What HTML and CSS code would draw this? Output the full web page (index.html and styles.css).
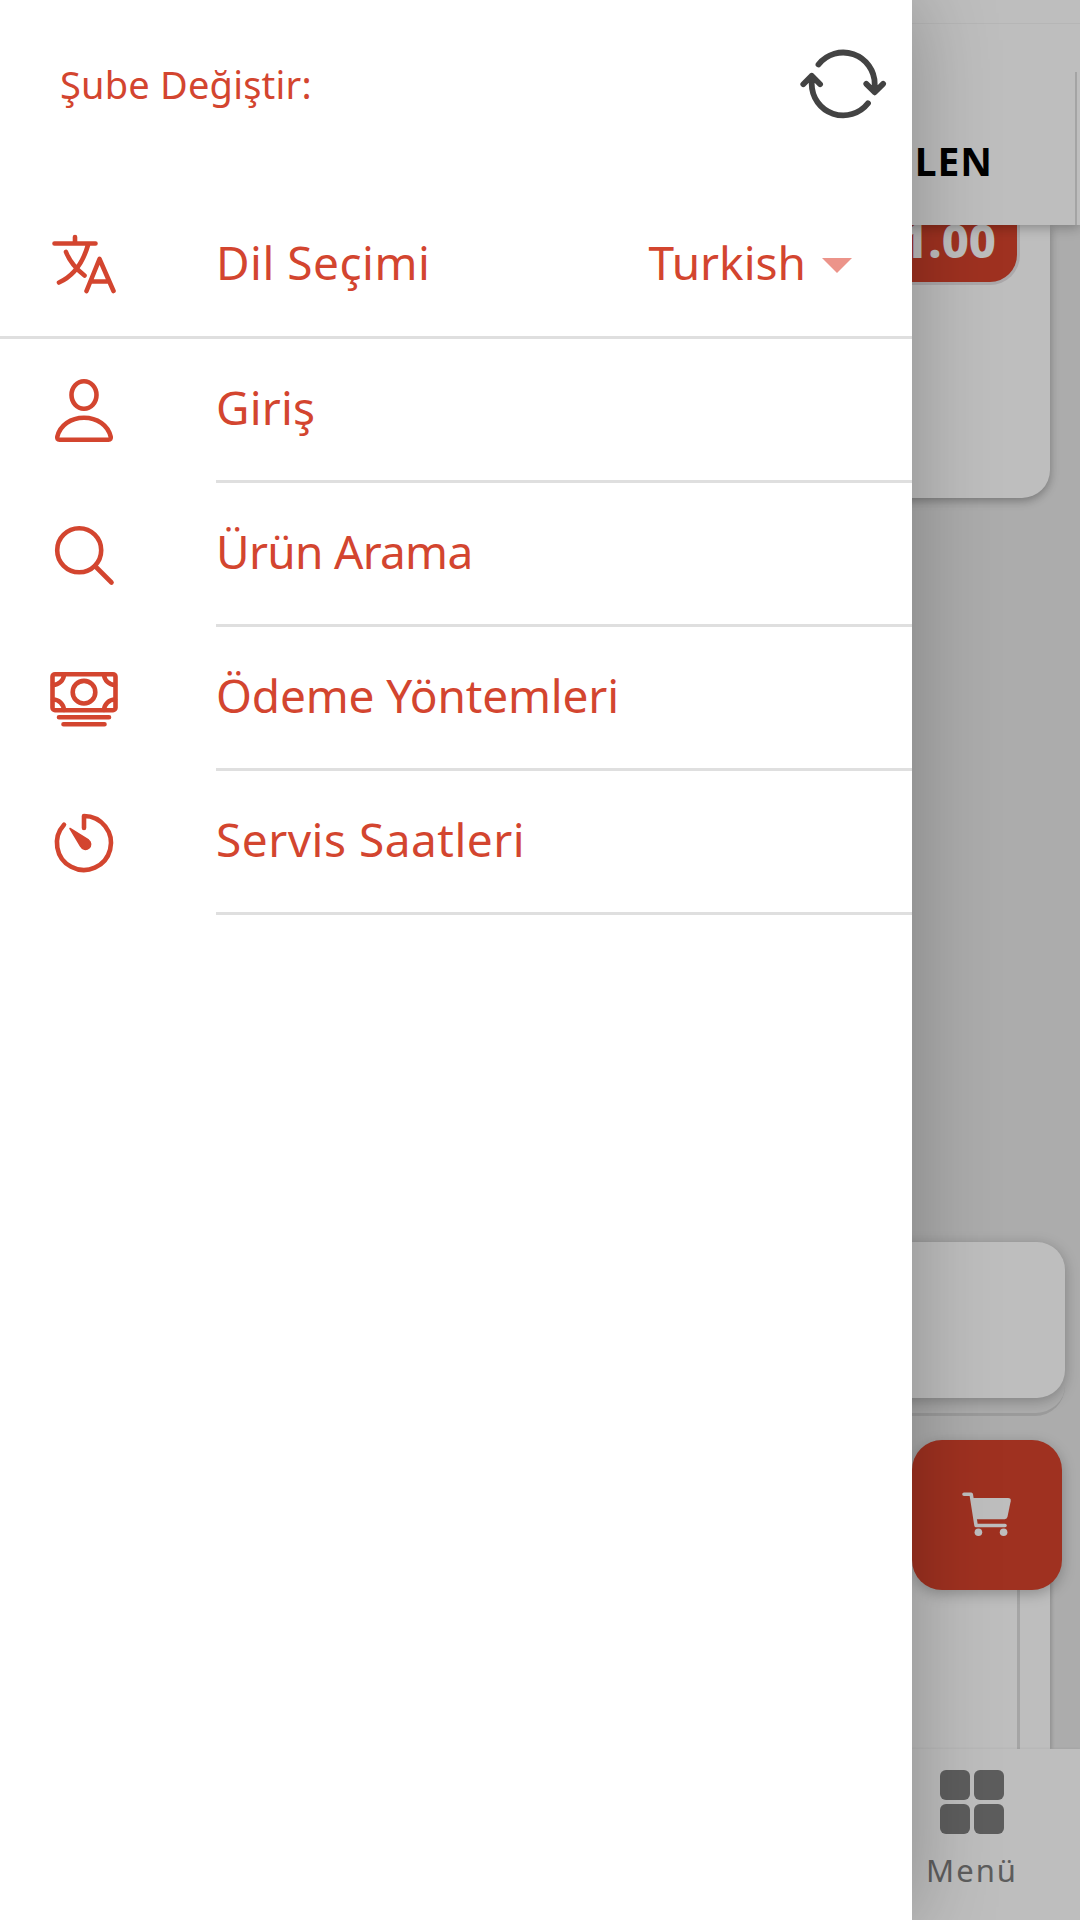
FILE: index.html
```
<!DOCTYPE html>
<html lang="tr">
<head>
  <meta charset="UTF-8" />
  <meta name="viewport" content="width=device-width, initial-scale=1.0" />
  <title>Menü</title>
  <link rel="stylesheet" href="styles.css">
</head>
<body>
  <div class="page">
    <header class="tabs">
      <div class="tabs-strip"></div>
      <div class="tab">LEN</div>
    </header>
    <main>
      <div class="product-card">
        <div class="price">1.00</div>
      </div>
      <div class="info-wrap">
        <div class="info-card"></div>
      </div>
      <div class="order-card">
        <div class="order-inner"></div>
        <button class="cart-btn" aria-label="Sepet">
          <svg width="50" height="46" viewBox="0 0 50 46">
            <path d="M2 3.300h7.200l4.900 31.200H43" fill="none" stroke="currentColor" stroke-width="3.600" stroke-linecap="round" stroke-linejoin="round"/>
            <path d="M10.500 7h35.500q3.300 0 2.700 3.300l-3.200 15.500q-.5 2.400-2.800 2.400H14z" fill="currentColor"/>
            <circle cx="16.400" cy="41.300" r="3.800" fill="currentColor"/>
            <circle cx="41.600" cy="41.300" r="3.800" fill="currentColor"/>
          </svg>
        </button>
      </div>
    </main>
    <footer class="bottom-bar">
      <div class="bottom-item">
        <div class="grid-icon"><i></i><i></i><i></i><i></i></div>
        <span>Menü</span>
      </div>
    </footer>
  </div>

  <div class="overlay"></div>

  <aside class="drawer">
    <div class="branch">
      <span>Şube Değiştir:</span>
      <svg class="refresh" width="96" height="96" viewBox="0 0 96 96">
        <path d="M23.500 28.500A31.500 31.500 0 0 1 79.700 48v8M71.300 47.900l8.400 8.400 8.400-8.400"/>
        <path d="M73 67.300A31.500 31.500 0 0 1 16.700 48v-8M8.300 48.200l8.400-8.400 8.400 8.400"/>
      </svg>
    </div>

    <div class="item language">
      <svg class="icon" viewBox="0 0 84 84">
        <path d="M12.500 21.500h41M33 15v6M46 23Q38 51 17 60.500M24 30q5 13 18.500 23.500M44.500 69l13-32 14 32M49 59.500h18"/>
      </svg>
      <div class="label">
        <span class="t-dil">Dil Seçimi</span>
        <span class="select">Turkish</span>
      </div>
    </div>
    <div class="item">
      <svg class="icon" viewBox="0 0 84 84">
        <ellipse cx="42" cy="27" rx="12.500" ry="13.700"/>
        <path d="M17.500 71.700h49c1.800 0 2.600-1.200 2.200-3C66 57 55 49.700 42 49.700S18 57 15.300 68.700c-.4 1.800.4 3 2.200 3z"/>
      </svg>
      <div class="label"><span class="t-giris">Giriş</span></div>
    </div>
    <div class="item">
      <svg class="icon" viewBox="0 0 84 84">
        <circle cx="37.200" cy="38.200" r="22"/>
        <path d="M53 54l16.500 16.500"/>
      </svg>
      <div class="label"><span class="t-arama">Ürün Arama</span></div>
    </div>
    <div class="item">
      <svg class="icon" viewBox="0 0 84 84">
        <rect x="10.500" y="18.200" width="63" height="36" rx="2.500"/>
        <circle cx="42" cy="36.200" r="11.300"/>
        <path d="M22 18.500A11 11 0 0 1 11 29M62 18.500A11 11 0 0 0 73 29M22 54A11 11 0 0 0 11 43.500M62 54a11 11 0 0 1 11-10.500M17 61.300h50M21.500 68.300h41"/>
      </svg>
      <div class="label"><span class="t-odeme">Ödeme Yöntemleri</span></div>
    </div>
    <div class="item">
      <svg class="icon" viewBox="0 0 84 84">
        <path d="M42 28V16A27 27 0 1 1 22 24.800"/>
        <path class="solid" d="M28 28.500L46.500 40a5.200 5.200 0 1 1-7.700 6.500z"/>
      </svg>
      <div class="label"><span class="t-servis">Servis Saatleri</span></div>
    </div>
  </aside>
</body>
</html>
```
FILE: styles.css
```
* {
  box-sizing: border-box;
}
body {
  margin: 0;
  width: 1080px;
  height: 1920px;
  position: relative;
  overflow: hidden;
  font-family: "Noto Sans", "Open Sans", sans-serif;
}
.page {
  height: 100%;
  display: flex;
  flex-direction: column;
  background: #e7e7e7;
  isolation: isolate;
}
.tabs {
  position: relative;
  z-index: 1;
  height: 225px;
  background: #fff;
  box-shadow: 0 2px 12px rgba(0,0,0,0.3);
}
.tabs-strip {
  height: 24px;
  border-bottom: 1px solid #f4f4f4;
}
.tab {
  height: 153px;
  margin-top: 48px;
  margin-right: 3px;
  padding: 63px 82px 0 0;
  border-right: 2px solid #dcdcdc;
  text-align: right;
  font-size: 39px;
  line-height: 52px;
  font-weight: 700;
  letter-spacing: 1px;
  color: #000;
}
main {
  flex: 1;
  display: flex;
  flex-direction: column;
}
.product-card {
  height: 273px;
  margin-right: 30px;
  background: #fff;
  border-radius: 0 0 28px 0;
  box-shadow: 0 3px 10px rgba(0,0,0,0.3);
}
.price {
  height: 60px;
  margin-right: 30px;
  padding-right: 21px;
  background: #d6432c;
  border: solid #e6e2e4;
  border-width: 0 3px 3px 0;
  border-radius: 0 0 30px 0;
  text-align: right;
  font-size: 47px;
  line-height: 30px;
  font-weight: 800;
  color: #fff;
}
.info-wrap {
  height: 174px;
  margin: 744px 15px 0 0;
  border-bottom: 3px solid #d0d0d0;
  border-radius: 0 30px 30px 0;
}
.info-card {
  height: 156px;
  background: #fff;
  border-radius: 0 28px 28px 0;
  box-shadow: 0 3px 14px rgba(0,0,0,0.25);
}
.order-card {
  position: relative;
  flex: 1;
  margin: 84px 30px 0 0;
  background: #fff;
  box-shadow: 2px 0 3px rgba(0,0,0,0.15);
}
.order-inner {
  height: 100%;
  margin-right: 30px;
  border-right: 3px solid #dedede;
}
.cart-btn {
  position: absolute;
  top: -60px;
  right: -12px;
  width: 150px;
  height: 150px;
  padding: 0;
  border: 0;
  border-radius: 30px;
  background: #d6432c;
  color: #fff;
  box-shadow: 0 4px 14px rgba(0,0,0,0.25);
}
.cart-btn svg {
  display: block;
  margin: -2px 0 0 50px;
}
.bottom-bar {
  position: relative;
  height: 171px;
  background: #fff;
  display: flex;
  justify-content: flex-end;
  box-shadow: 0 -1px 2px rgba(0,0,0,0.05);
}
.bottom-item {
  width: 216px;
  padding-top: 21px;
  display: flex;
  flex-direction: column;
  align-items: center;
  color: #7d7d7d;
  font-size: 31px;
  line-height: 42px;
  letter-spacing: 2px;
}
.grid-icon {
  display: grid;
  grid-template-columns: 30px 30px;
  grid-auto-rows: 30px;
  gap: 4px;
  margin-bottom: 15px;
}
.grid-icon i {
  background: #7d7d7d;
  border-radius: 6px;
}
.overlay {
  position: absolute;
  inset: 0;
  background: rgba(0,0,0,0.255);
}

.drawer {
  position: absolute;
  top: 0;
  left: 0;
  width: 912px;
  height: 100%;
  background: #fff;
  color: #d3452f;
  box-shadow: 0 0 80px rgba(0,0,0,0.27);
}
.branch {
  height: 168px;
  padding: 0 21px 0 60px;
  display: flex;
  align-items: center;
  justify-content: space-between;
  font-size: 38px;
  letter-spacing: 0.2px;
}
.branch svg {
  fill: none;
  stroke: #434343;
  stroke-width: 5.8;
  stroke-linecap: round;
  stroke-linejoin: round;
}
.item {
  height: 144px;
  display: flex;
  align-items: center;
  font-size: 46px;
}
.icon {
  width: 84px;
  height: 84px;
  margin: 0 90px 3px 42px;
  fill: none;
  stroke: currentColor;
  stroke-width: 4.6;
  stroke-linecap: round;
  stroke-linejoin: round;
}
.icon .solid {
  fill: currentColor;
  stroke-width: 1.5;
}
.label {
  flex: 1;
  height: 100%;
  padding-bottom: 5px;
  display: flex;
  align-items: center;
  justify-content: space-between;
  border-bottom: 3px solid #dfdfdf;
}
.language {
  height: 171px;
  padding-top: 21px;
  border-bottom: 3px solid #dfdfdf;
}
.language .icon {
  margin-bottom: -2px;
}
.language .label {
  padding-bottom: 2px;
  border: 0;
}
.select {
  display: flex;
  align-items: center;
  gap: 16px;
  margin-right: 60px;
}
.select::after {
  content: "";
  margin-top: 7px;
  border: 15px solid transparent;
  border-top-color: #ec948a;
  border-bottom: 0;
}
.t-dil,
.t-servis {
  letter-spacing: 0.5px;
}
.t-giris {
  letter-spacing: 0.2px;
}
.t-arama {
  letter-spacing: -0.7px;
}
.t-odeme {
  letter-spacing: -0.15px;
}
```
